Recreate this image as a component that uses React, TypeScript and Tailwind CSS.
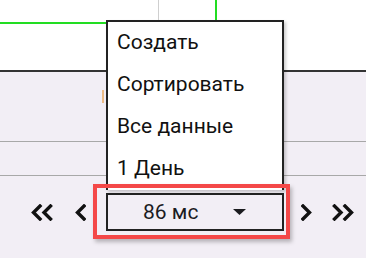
import React from 'react';

const menuItems = ['Создать', 'Сортировать', 'Все данные', '1 День'];

function Chevron({ double, dir }: { double?: boolean; dir: 'left' | 'right' }) {
  const w = double ? 22 : 11;
  const flip = dir === 'right' ? `translate(${w} 0) scale(-1 1)` : undefined;
  return (
    <svg width={w} height={17} viewBox={`0 0 ${w} 17`} className="shrink-0">
      <g transform={flip} fill="none" stroke="#111" strokeWidth={3.4} strokeLinecap="square" strokeLinejoin="miter">
        <polyline points="9,2 2.5,8.5 9,15" />
        {double && <polyline points="19.5,2 13,8.5 19.5,15" />}
      </g>
    </svg>
  );
}

export default function App() {
  return (
    <div className="relative w-[366px] h-[258px] overflow-hidden bg-[#f2eef5] font-['Roboto',sans-serif] text-[#1b1b1f]">
      {/* chart strip */}
      <div className="relative h-[72px] bg-white border-b-2 border-[#333]">
        <svg width="366" height="70" className="absolute left-0 top-0">
          <line x1="0" y1="23" x2="106" y2="23" stroke="#22dd22" strokeWidth="2" />
          <line x1="158.5" y1="0" x2="158.5" y2="21" stroke="#cfcfcf" strokeWidth="1" />
          <line x1="216" y1="0" x2="216" y2="21" stroke="#22dd22" strokeWidth="2" />
        </svg>
      </div>

      {/* rows */}
      <div className="relative h-[70px] border-b border-[#a8a8a8]">
        <span className="absolute left-[102px] top-[18px] w-[2px] h-[13px] bg-[#e89a3c] opacity-60" />
      </div>
      <div className="h-[34px] border-b border-[#a8a8a8]" />

      {/* pager */}
      <div className="flex items-center pt-[17px] pl-[31px]">
        <Chevron double dir="left" />
        <div className="ml-[22px]">
          <Chevron dir="left" />
        </div>
        <div className="ml-[20px] w-[178px] h-[38px] border-2 border-[#222] flex items-center">
          <span className="pl-[35px] text-[21px] leading-none">86 мс</span>
          <svg width="13" height="6" viewBox="0 0 13 6" className="ml-auto mr-[36px]">
            <polygon points="0,0 13,0 6.5,6" fill="#1b1b1f" />
          </svg>
        </div>
        <div className="ml-[17px]">
          <Chevron dir="right" />
        </div>
        <div className="ml-[20px]">
          <Chevron double dir="right" />
        </div>
      </div>

      {/* dropdown menu */}
      <div className="absolute left-[106px] top-[20px] w-[178px] bg-white border-2 border-b-0 border-[#222] shadow-[2px_2px_3px_rgba(0,0,0,0.2)]">
        {menuItems.map((item) => (
          <div key={item} className="h-[42px] flex items-center pl-[9px] text-[21px] text-[#111]">
            {item}
          </div>
        ))}
      </div>

      {/* highlight */}
      <div className="absolute left-[93px] top-[184px] w-[197px] h-[55px] border-4 border-[#f44848] shadow-[2px_3px_4px_rgba(0,0,0,0.25)] pointer-events-none" />
    </div>
  );
}
